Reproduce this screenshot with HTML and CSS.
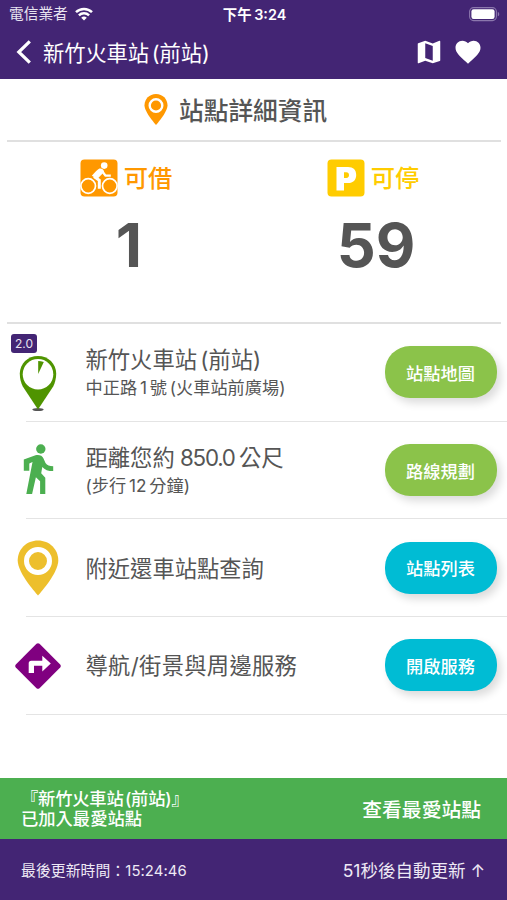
FILE: index.html
```html
<!DOCTYPE html>
<html lang="zh-TW">

<head>
  <meta charset="UTF-8">
  <meta name="viewport" content="width=device-width, initial-scale=1.0">
  <title>站點詳細資訊</title>
  <link rel="stylesheet" href="styles.css">
</head>

<body>
  <div class="app">
    <!-- 頂部導覽 -->
    <header class="header">
      <div class="status-bar">
        <div class="carrier">
          <span>電信業者</span>
          <svg class="wifi" width="18" height="14" viewBox="0 0 18 14">
            <path d="M1 5.2a11.5 11.5 0 0 1 16 0" fill="none" stroke="#fff" stroke-width="2.5" />
            <path d="M3.9 8.3a7.3 7.3 0 0 1 10.2 0" fill="none" stroke="#fff" stroke-width="2.4" />
            <path d="M9 13.6 6.2 10.8a4.1 4.1 0 0 1 5.6 0z" fill="#fff" />
          </svg>
        </div>
        <div class="clock">下午 3:24</div>
        <svg class="battery" width="31" height="15" viewBox="0 0 31 15">
          <rect x=".6" y=".6" width="26.8" height="13" rx="4" fill="none" stroke="#8b77ad" stroke-width="1.1" />
          <rect x="2.4" y="2.3" width="23.2" height="9.6" rx="2.2" fill="#fff" />
          <path d="M28.8 4.9c1.9.6 1.9 3.8 0 4.4z" fill="#8b77ad" />
        </svg>
      </div>
      <div class="nav-bar">
        <svg class="back" width="16" height="24" viewBox="0 0 16 24">
          <path d="M14.8 1.3 3.8 12l11 10.7" fill="none" stroke="#fff" stroke-width="3.2" />
        </svg>
        <h1>新竹火車站 (前站)</h1>
        <svg class="nav-map" width="30" height="30" viewBox="0 0 24 24" fill="#fff">
          <path d="M20.5 3l-.16.03L15 5.1 9 3 3.36 4.9c-.21.07-.36.25-.36.48V20.5c0 .28.22.5.5.5l.16-.03L9 18.9l6 2.1 5.64-1.9c.21-.07.36-.25.36-.48V3.5c0-.28-.22-.5-.5-.5zM15 19l-6-2.11V5l6 2.11V19z" />
        </svg>
        <svg class="nav-heart" width="30" height="30" viewBox="0 0 24 24" fill="#fff">
          <path d="M12 21.35l-1.45-1.32C5.4 15.36 2 12.28 2 8.5 2 5.42 4.42 3 7.5 3c1.74 0 3.41.81 4.5 2.09C13.09 3.81 14.76 3 16.5 3 19.58 3 22 5.42 22 8.5c0 3.78-3.4 6.86-8.55 11.54L12 21.35z" />
        </svg>
      </div>
    </header>

    <div class="section-title">
      <svg width="24" height="32" viewBox="0 0 24 32">
        <path d="M12 0C5.3 0 .5 5 .5 11.3.5 18.5 12 31 12 31s11.5-12.5 11.5-19.7C23.5 5 18.7 0 12 0z" fill="#ff9800" />
        <circle cx="12" cy="11.5" r="6.3" fill="none" stroke="#fff" stroke-width="2.4" />
      </svg>
      <h2>站點詳細資訊</h2>
    </div>

    <!-- 可借 / 可停 數量 -->
    <div class="stats">
      <div class="stat">
        <div class="stat-label rent">
          <svg width="38" height="38" viewBox="0 0 38 38">
            <rect x=".5" y=".5" width="37" height="37" rx="4" fill="#ff9800" />
            <circle cx="24.2" cy="6.6" r="3.3" fill="#fff" />
            <g fill="none" stroke="#fff">
              <circle cx="8.2" cy="27" r="7.3" stroke-width="1.7" />
              <circle cx="29.8" cy="27" r="7.3" stroke-width="1.7" />
              <path d="M14 17.5l5.3 3.8v8.4" stroke-width="3" />
              <path d="M22 12l3.5 4.7h5.3" stroke-width="2.3" />
            </g>
            <path d="M11.8 16.8q5-5.8 7.6-7.3c2.2-.6 4.800 1.200 4.600 3.600L17.400 20z" fill="#fff" />
          </svg>
          <span>可借</span>
        </div>
        <div class="stat-number">1</div>
      </div>
      <div class="stat">
        <div class="stat-label park">
          <svg width="38" height="38" viewBox="0 0 38 38">
            <rect x=".5" y=".5" width="37" height="37" rx="4" fill="#ffcc00" />
            <path d="M9.500 8h11.500c5.300 0 8.200 3 8.200 7.900s-3 8.100-8.200 8.100h-4V31.500H9.500z M17 13.200v5.800h2.300c1.900 0 2.700-1.200 2.700-2.900s-.8-2.900-2.700-2.900z" fill="#fff" fill-rule="evenodd" />
          </svg>
          <span>可停</span>
        </div>
        <div class="stat-number">59</div>
      </div>
    </div>

    <!-- 功能列表 -->
    <ul class="list">
      <li class="row">
        <span class="version">2.0</span>
        <div class="row-icon station">
          <svg width="38" height="56" viewBox="0 0 38 56">
            <ellipse cx="19" cy="53.6" rx="5.7" ry="1.5" fill="#555" />
            <path d="M19 0C8.8 0 .8 7.8 .8 17.5c0 5 1.2 9.5 3 13L19 53.5l15.2-23c1.8-3.5 3-8 3-13C37.2 7.8 29.2 0 19 0z" fill="#4f9400" />
            <circle cx="19" cy="18.3" r="15.3" fill="#fff" />
            <path d="M19.200 18V5q2.700 0 5.600 1z" fill="#4f9400" />
          </svg>
        </div>
        <div class="row-text">
          <div class="name">新竹火車站 (前站)</div>
          <div class="desc">中正路 1 號 (火車站前廣場)</div>
        </div>
        <button class="btn green">站點地圖</button>
      </li>
      <li class="row">
        <div class="row-icon walk">
          <svg width="32" height="52" viewBox="0 0 32 52" fill="#4caf50">
            <circle cx="18.8" cy="6" r="4.7" />
            <path d="M13.5 12.3c3.6-.8 6.800.3 8 3.200l2 4.500c1.600 2.400 4 3.300 7.700 3.300v4.800c-5.200 0-8.400-1.400-10.900-4.200l-1.100 6.400 4.100 4.400V51h-5.200V38.200l-4.200-4-3.800 16.800H4.300l6.200-32-3.200 1.500v7.300H1.800V16.500z" />
          </svg>
        </div>
        <div class="row-text">
          <div class="name">距離您約 <span class="distance">850.0</span> 公尺</div>
          <div class="desc">(步行 12 分鐘)</div>
        </div>
        <button class="btn green">路線規劃</button>
      </li>
      <li class="row">
        <div class="row-icon">
          <svg width="42" height="56" viewBox="0 0 42 56">
            <path d="M21 .5C9.5 .5 .7 9.2 .7 20.5 .7 33.5 21 55.5 21 55.5S41.3 33.5 41.3 20.5C41.3 9.2 32.5 .5 21 .5z" fill="#edbf2c" />
            <circle cx="21" cy="21" r="11.5" fill="none" stroke="#fff" stroke-width="5" />
          </svg>
        </div>
        <div class="row-text">
          <div class="name">附近還車站點查詢</div>
        </div>
        <button class="btn cyan">站點列表</button>
      </li>
      <li class="row">
        <div class="row-icon">
          <svg width="46" height="46" viewBox="0 0 46 46">
            <path d="M21.5.8q1.5-1.2 3 0l20.7 20.7q1.2 1.5 0 3L24.5 45.2q-1.5 1.2-3 0L.8 24.5q-1.2-1.5 0-3z" fill="#800080" />
            <path d="M13.7 30V20.3q0-2.6 2.6-2.6h11V12.8L35.8 20.5l-8.5 8v-5.8H19V30z" fill="#fff" />
          </svg>
        </div>
        <div class="row-text">
          <div class="name services">導航/街景與周邊服務</div>
        </div>
        <button class="btn cyan">開啟服務</button>
      </li>
    </ul>

    <!-- 加入最愛提示 -->
    <div class="toast">
      <div class="toast-text"><span class="station-name">『新竹火車站 (前站)』</span><br>已加入最愛站點</div>
      <div class="toast-action">查看最愛站點</div>
    </div>

    <footer class="footer">
      <div class="updated">最後更新時間：15:24:46</div>
      <div class="refresh">51秒後自動更新 ↑</div>
    </footer>
  </div>
</body>

</html>
```

FILE: styles.css
```css
* {
  margin: 0;
  padding: 0;
  box-sizing: border-box;
}

body {
  font-family: Inter, 'Noto Sans CJK TC', sans-serif;
  background-color: #fff;
  color: #555;
}

svg {
  display: block;
  flex-shrink: 0;
}

.app {
  display: flex;
  flex-direction: column;
  width: 507px;
  height: 900px;
  overflow: hidden;
  white-space: nowrap;
}

/* 頂部導覽 */
.header {
  height: 79px;
  background-color: #432574;
  color: #fff;
}

.status-bar {
  display: grid;
  grid-template-columns: 1fr auto 1fr;
  align-items: center;
  height: 27px;
  padding: 0 7px 0 9px;
  font-size: 14.7px;
  line-height: 27px;
}

.carrier {
  display: flex;
  align-items: center;
  gap: 7px;
  color: #e8e3f0;
}

.carrier span {
  padding-top: 1px;
}

.clock {
  font-size: 14.4px;
  font-weight: 600;
  word-spacing: -1px;
}

.battery {
  justify-self: end;
}

.nav-bar {
  display: flex;
  align-items: center;
  height: 50px;
  padding: 0 24px 0 15px;
}

.nav-bar h1 {
  flex: 1;
  margin-left: 12px;
  padding-top: 1px;
  font-size: 21.3px;
  font-weight: 400;
  line-height: 50px;
  letter-spacing: -0.1px;
  word-spacing: -3px;
}

.nav-heart {
  margin-left: 9px;
}

/* 標題 */
.section-title {
  display: flex;
  align-items: center;
  gap: 11px;
  height: 63px;
  margin: 0 6px 0 7px;
  padding-left: 137px;
  border-bottom: 2px solid #e0e0e0;
}

.section-title h2 {
  padding-top: 2px;
  font-size: 24.7px;
  font-weight: 500;
  line-height: 36px;
}

/* 車輛數量 */
.stats {
  display: grid;
  grid-template-columns: 1fr 1fr;
  height: 182px;
  margin: 0 6px 0 7px;
  padding-top: 17px;
  border-bottom: 2px solid #e0e0e0;
}

.stat {
  display: flex;
  flex-direction: column;
  align-items: center;
  padding-right: 9px;
}

.stat-label {
  display: flex;
  align-items: center;
  gap: 6px;
  height: 38px;
  font-size: 24.3px;
  font-weight: 500;
  line-height: 34px;
}

.rent {
  color: #ff9800;
}

.park {
  color: #ffcc00;
}

.stat-number {
  margin-top: 12px;
  padding-left: 6px;
  font-size: 61px;
  font-weight: 700;
  line-height: 72px;
}

/* 功能列表 */
.list {
  flex: 1;
  list-style: none;
}

.row {
  position: relative;
  display: flex;
  align-items: center;
  height: 97.7px;
  padding-right: 10px;
}

.row::after {
  content: '';
  position: absolute;
  left: 26px;
  right: 0;
  bottom: 0;
  height: 1px;
  background-color: #e4e4e4;
}

.row-icon {
  display: flex;
  justify-content: center;
  width: 76px;
}

.station {
  padding-top: 22px;
}

.walk {
  padding-bottom: 4px;
}

.version {
  position: absolute;
  left: 11px;
  top: 10px;
  width: 26px;
  height: 19px;
  border-radius: 3px;
  background-color: #432574;
  color: #e8e3f0;
  font-size: 12px;
  line-height: 19px;
  text-align: center;
}

.row-text {
  flex: 1;
  padding: 1px 0 0 9.5px;
}

.name {
  font-size: 22.3px;
  line-height: 30px;
  word-spacing: -3px;
}

.distance {
  margin: 0 1px 0 2px;
  letter-spacing: -1.2px;
}

.services {
  letter-spacing: 0.3px;
}

.desc {
  font-size: 17.2px;
  line-height: 26px;
  word-spacing: -2px;
}

.btn {
  width: 112px;
  height: 52px;
  margin-top: -1px;
  padding-right: 1px;
  border: none;
  border-radius: 25px;
  box-shadow: 4px 5px 9px rgba(0, 0, 0, 0.14);
  color: #fff;
  font-family: inherit;
  font-size: 17.2px;
  font-weight: 500;
}

.green {
  background-color: #8bc34a;
}

.cyan {
  background-color: #00bcd4;
}

/* 提示與頁尾 */
.toast {
  display: flex;
  justify-content: space-between;
  align-items: center;
  height: 61px;
  padding: 0 26px 0 21px;
  background-color: #4caf50;
  color: #fff;
  font-weight: 500;
}

.toast-text {
  font-size: 17.3px;
  line-height: 20px;
  word-spacing: -3px;
}

.station-name {
  letter-spacing: -0.2px;
}

.toast-action {
  font-size: 19.8px;
}

.footer {
  display: flex;
  justify-content: space-between;
  align-items: center;
  height: 61px;
  padding: 0 22px 0 21px;
  background-color: #432574;
  color: #eee9f5;
}

.updated {
  font-size: 14.8px;
  letter-spacing: 0.1px;
}

.refresh {
  font-size: 17.5px;
}
```
